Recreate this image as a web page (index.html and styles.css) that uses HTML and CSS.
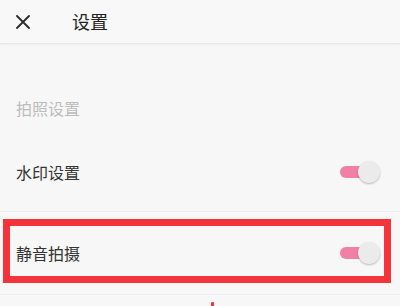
FILE: index.html
```html
<!DOCTYPE html>
<html lang="zh">
<head>
<meta charset="utf-8">
<link rel="stylesheet" href="styles.css">
</head>
<body>
<div class="page">
  <header class="header">
    <svg class="close" width="14" height="14" viewBox="0 0 14 14">
      <path d="M1 1 L13 13 M13 1 L1 13" stroke="#2a2a2a" stroke-width="1.8" stroke-linecap="round" fill="none"/>
    </svg>
    <div class="title">设置</div>
  </header>
  <div class="section-label">拍照设置</div>
  <div class="row row-first">
    <span class="row-text">水印设置</span>
    <span class="toggle"><span class="track"></span><span class="thumb"></span></span>
  </div>
  <div class="row row-second">
    <span class="row-text">静音拍摄</span>
    <span class="toggle"><span class="track"></span><span class="thumb"></span></span>
  </div>
  <div class="highlight"></div>
  <div class="arrow-tip"></div>
</div>
</body>
</html>
```
FILE: styles.css
```css
html, body {
  margin: 0;
  padding: 0;
  background: #f7f7f7;
}
.page {
  position: relative;
  width: 400px;
  height: 306px;
  overflow: hidden;
  font-family: "Noto Sans CJK SC", "Noto Sans", sans-serif;
  background: #f7f7f7;
}
.header {
  height: 43px;
  display: flex;
  align-items: center;
  border-bottom: 1px solid #e9e9e9;
  box-shadow: 0 1px 2px rgba(0, 0, 0, 0.04);
  background: #f8f8f8;
}
.close {
  margin-left: 16px;
  margin-top: 1px;
}
.title {
  margin-left: 42px;
  font-size: 18px;
  line-height: 24px;
  color: #222;
  margin-top: -2px;
}
.section-label {
  padding-top: 52px;
  padding-bottom: 13px;
  padding-left: 16px;
  font-size: 16px;
  line-height: 24px;
  color: #bcbcbc;
}
.row {
  display: flex;
  align-items: center;
  justify-content: space-between;
  padding-left: 16px;
  padding-right: 20px;
  border-bottom: 1px solid #eeeeee;
}
.row-first {
  height: 78px;
}
.row-second {
  height: 82px;
}
.row-text {
  font-size: 16px;
  line-height: 24px;
  color: #333;
}
.toggle {
  position: relative;
  width: 40px;
  height: 22px;
}
.track {
  position: absolute;
  left: 0;
  top: 5px;
  width: 28px;
  height: 12px;
  border-radius: 6px;
  background: #f27fa5;
}
.thumb {
  position: absolute;
  right: 0;
  top: 0;
  width: 22px;
  height: 22px;
  border-radius: 50%;
  background: #ebebeb;
  box-shadow: 0 1px 2px rgba(0, 0, 0, 0.25);
}
.highlight {
  position: absolute;
  left: 3px;
  top: 219px;
  width: 374px;
  height: 50px;
  border: 7px solid #f5333a;
}
.arrow-tip {
  position: absolute;
  left: 211px;
  top: 302px;
  width: 3px;
  height: 4px;
  background: #f5333a;
  border-radius: 1px 1px 0 0;
}
```
